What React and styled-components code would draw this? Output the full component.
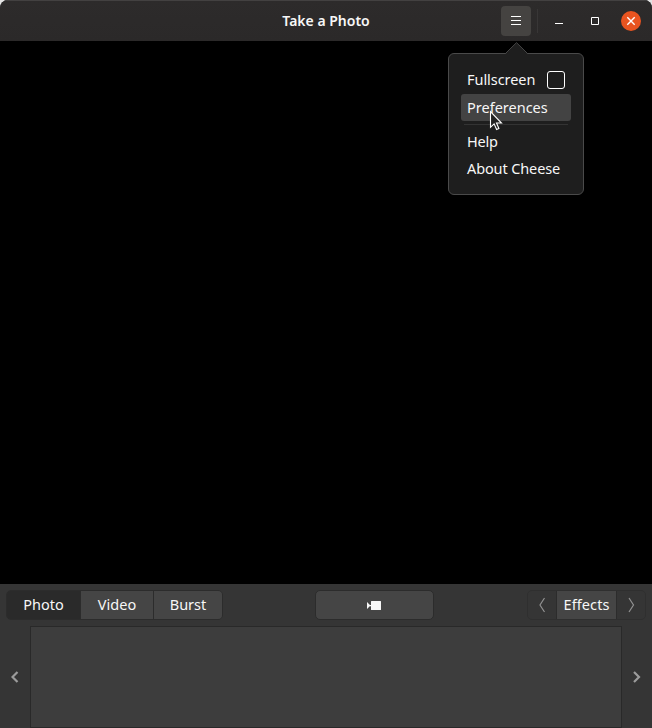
import React from 'react';
import styled, { createGlobalStyle } from 'styled-components';

const Global = createGlobalStyle`
  * { box-sizing: border-box; }
  html, body { margin: 0; background: #000; }
  body {
    font-family: "Noto Sans", "Open Sans", sans-serif;
    font-size: 14.5px;
    line-height: 20px;
    color: #f7f7f7;
    overflow: hidden;
  }
`;

const Desktop = styled.div`
  width: 652px;
  height: 728px;
  background: #e4e4e4;
`;

const Window = styled.div`
  position: relative;
  display: flex;
  flex-direction: column;
  height: 100%;
  overflow: hidden;
  border-radius: 8px 8px 0 0;
  background: #353535;
`;

const HeaderBar = styled.header`
  display: grid;
  grid-template-columns: 1fr auto 1fr;
  align-items: center;
  height: 41px;
  flex: none;
  background: linear-gradient(#2d2b2b, #2b2929);
  box-shadow: inset 0 1px #434141;
`;

const Title = styled.h1`
  grid-column: 2;
  margin: 0;
  font-size: 14px;
  font-weight: 600;
  line-height: 20px;
`;

const Controls = styled.div`
  display: flex;
  align-items: center;
  justify-content: flex-end;
  padding: 1px 11px 0 0;
`;

const MenuButton = styled.button`
  display: grid;
  place-items: center;
  width: 30px;
  height: 30px;
  padding: 0;
  border: 0;
  border-radius: 4px;
  background: #454341;
  color: #fff;
`;

const Divider = styled.i`
  width: 1px;
  height: 24px;
  margin: 0 11px 0 6px;
  background: #383636;
`;

const WindowButton = styled.button`
  display: grid;
  place-items: center;
  width: 20px;
  height: 20px;
  margin-right: ${(p) => (p.$close ? 0 : 16)}px;
  padding: 0;
  border: 0;
  border-radius: 50%;
  background: ${(p) => (p.$close ? '#e95420' : 'transparent')};
  color: #fff;
`;

const Viewfinder = styled.main`
  height: 543px;
  flex: none;
  background: #000;
`;

const Toolbar = styled.div`
  display: flex;
  justify-content: space-between;
  align-items: center;
  height: 42px;
  flex: none;
  padding: 0 6px;
`;

const ButtonGroup = styled.div`
  display: flex;
  height: 30px;
  border: 1px solid ${(p) => (p.$faint ? '#2f2f2f' : '#2c2c2c')};
  border-radius: 5px;
  overflow: hidden;
`;

const GroupButton = styled.button`
  display: grid;
  place-items: center;
  width: ${(p) => p.$width}px;
  padding: 0;
  border: 0;
  border-left: ${(p) => (p.$first ? 0 : '1px solid #2c2c2c')};
  background: ${(p) => (p.$active ? '#2a2a2a' : p.$flat ? '#353535' : '#454545')};
  color: ${(p) => (p.$flat ? '#919191' : '#f7f7f7')};
  font: inherit;
`;

const CaptureButton = styled.button`
  display: grid;
  place-items: center;
  width: 119px;
  height: 30px;
  margin-right: 2px;
  padding: 0;
  border: 1px solid #2c2c2c;
  border-radius: 5px;
  background: #454545;
  color: #f7f7f7;
`;

const Strip = styled.section`
  display: grid;
  grid-template-columns: 30px 592px 30px;
  flex: 1;
`;

const StripArrow = styled.button`
  display: grid;
  place-items: center;
  padding: 0;
  border: 0;
  background: transparent;
  color: #9c9c9c;
`;

const Thumbnails = styled.div`
  border: 1px solid #292929;
  background: #3d3d3d;
`;

const Popover = styled.nav`
  position: absolute;
  top: 53px;
  left: 448px;
  width: 136px;
  height: 142px;
  padding: 12px;
  border: 1px solid #4a4a4a;
  border-radius: 6px;
  background: #1e1e1e;
`;

const PopoverTip = styled.svg`
  position: absolute;
  top: -12px;
  left: 56px;
`;

const MenuItem = styled.div`
  display: flex;
  align-items: center;
  justify-content: space-between;
  width: 110px;
  height: ${(p) => p.$height || 27}px;
  padding: 0 6px;
  border-radius: 3px;
  background: ${(p) => (p.$hover ? '#434343' : 'transparent')};
  white-space: nowrap;
`;

const Separator = styled.hr`
  height: 1px;
  margin: 3px;
  border: 0;
  background: #333;
`;

const Checkbox = styled.i`
  width: 18px;
  height: 18px;
  border: 1px solid #fff;
  border-radius: 3px;
`;

const Label = styled.span`
  padding-bottom: 2px;
  letter-spacing: ${(p) => p.$track || 0}px;
  white-space: nowrap;
`;

const Pointer = styled.svg`
  position: absolute;
  left: 489px;
  top: 110px;
`;

export default function App() {
  return (
    <Desktop>
      <Global />
      <Window>
        <HeaderBar>
          <Title>Take a Photo</Title>
          <Controls>
            <MenuButton aria-label="Menu">
              <svg width="12" height="12" shapeRendering="crispEdges">
                <path d="M1 1.5h10M1 5.5h10M1 9.5h10" stroke="currentColor" />
              </svg>
            </MenuButton>
            <Divider />
            <WindowButton aria-label="Minimize">
              <svg width="10" height="10"><path d="M1 7.5h8" stroke="currentColor" /></svg>
            </WindowButton>
            <WindowButton aria-label="Maximize">
              <svg width="10" height="10"><path d="M1.5 1.5h7v7h-7z" fill="none" stroke="currentColor" /></svg>
            </WindowButton>
            <WindowButton $close aria-label="Close">
              <svg width="10" height="10"><path d="M1.3 1.3l7.4 7.4M8.7 1.3L1.3 8.7" stroke="currentColor" strokeWidth="1.4" /></svg>
            </WindowButton>
          </Controls>
        </HeaderBar>
        <Viewfinder />
        <Toolbar>
          <ButtonGroup>
            <GroupButton $first $active $width={73}><Label>Photo</Label></GroupButton>
            <GroupButton $width={73}><Label>Video</Label></GroupButton>
            <GroupButton $width={69}><Label>Burst</Label></GroupButton>
          </ButtonGroup>
          <CaptureButton aria-label="Take a photo">
            <svg width="16" height="10">
              <path d="M5 1.5q0-.5.5-.5h9q.5 0 .5.5v8q0 .5-.5.5h-9q-.5 0-.5-.5v-3L4 6 1 9V2l3 3h1z" fill="currentColor" />
            </svg>
          </CaptureButton>
          <ButtonGroup $faint>
            <GroupButton $first $flat $width={28} aria-label="Previous effects">
              <svg width="8" height="16"><path d="M6.5 1L2 8l4.5 7" fill="none" stroke="currentColor" strokeWidth="1.2" /></svg>
            </GroupButton>
            <GroupButton $width={60}><Label $track={0.1}>Effects</Label></GroupButton>
            <GroupButton $flat $width={29} aria-label="Next effects">
              <svg width="8" height="16"><path d="M2 1l4.5 7L2 15" fill="none" stroke="currentColor" strokeWidth="1.2" /></svg>
            </GroupButton>
          </ButtonGroup>
        </Toolbar>
        <Strip>
          <StripArrow aria-label="Scroll left">
            <svg width="8" height="12"><path d="M6.5 1l-5 5 5 5" fill="none" stroke="currentColor" strokeWidth="2.2" /></svg>
          </StripArrow>
          <Thumbnails />
          <StripArrow aria-label="Scroll right">
            <svg width="8" height="12"><path d="M1 1l5 5-5 5" fill="none" stroke="currentColor" strokeWidth="2.2" /></svg>
          </StripArrow>
        </Strip>
        <Popover>
          <PopoverTip width="24" height="13">
            <path d="M.5 12l11-11 11 11v1H.5z" fill="#1e1e1e" />
            <path d="M.5 11.5L11.5.7l11 10.800" fill="none" stroke="#4a4a4a" />
          </PopoverTip>
          <MenuItem $height={28}><Label $track={-0.05}>Fullscreen</Label><Checkbox /></MenuItem>
          <MenuItem $hover><Label>Preferences</Label></MenuItem>
          <Separator />
          <MenuItem><Label $track={-0.25}>Help</Label></MenuItem>
          <MenuItem><Label $track={-0.12}>About Cheese</Label></MenuItem>
        </Popover>
        <Pointer width="14" height="22" viewBox="0 0 14 22">
          <path d="M1.5 1.5v15.8l3.6-3.4 2.5 5.6 2.3-1-2.4-5.5h5z" fill="#222" stroke="#fff" strokeWidth="1.1" />
        </Pointer>
      </Window>
    </Desktop>
  );
}
